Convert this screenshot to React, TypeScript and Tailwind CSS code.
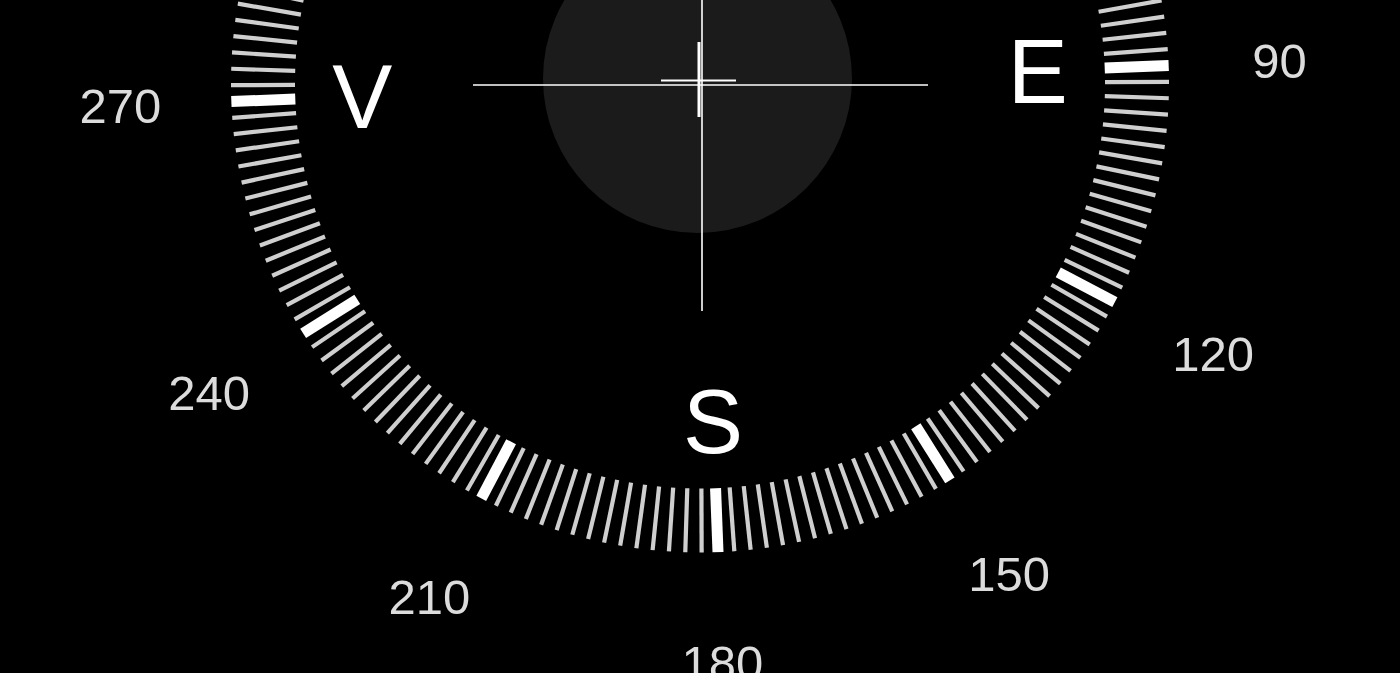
import React from "react";

const CX = 700;
const CY = 83.5;
const TILT = -2.2; // dial rotation in degrees
const R_IN = 405;
const R_OUT = 469;
const R_LETTER = 338;
const R_LABEL = 580;

function polar(r: number, deg: number) {
  const a = ((deg + TILT) * Math.PI) / 180;
  return { x: CX + r * Math.sin(a), y: CY - r * Math.cos(a) };
}

// only the part of the dial that is on screen gets text
const LETTERS = [
  { t: "E", d: 90 },
  { t: "S", d: 180 },
  { t: "V", d: 270 },
];
const LABELS = [90, 120, 150, 180, 210, 240, 270];

export default function App() {
  const ticks = Array.from({ length: 180 }, (_, i) => i * 2);

  return (
    <div className="h-[673px] w-full overflow-hidden bg-black">
      <svg
        className="block h-full w-full font-['Liberation_Sans',Arial,sans-serif]"
        viewBox="0 0 1400 673"
        width="1400"
        height="673"
      >
        <circle cx={697.5} cy={78.5} r={154.5} fill="#1b1b1b" />

        {ticks.map((d) => {
          const major = d % 30 === 0;
          const a = polar(R_IN, d);
          const b = polar(R_OUT, d);
          return (
            <line
              key={d}
              x1={a.x}
              y1={a.y}
              x2={b.x}
              y2={b.y}
              stroke={major ? "#ffffff" : "#cfcfcf"}
              strokeWidth={major ? 11 : 4.2}
            />
          );
        })}

        {LETTERS.map((l) => {
          const p = polar(R_LETTER, l.d);
          return (
            <text key={l.t} x={p.x} y={p.y + 32} textAnchor="middle" fill="#ffffff" fontSize={90}>
              {l.t}
            </text>
          );
        })}

        {LABELS.map((d) => {
          const p = polar(R_LABEL, d);
          return (
            <text key={d} x={p.x} y={p.y + 17} textAnchor="middle" fill="#dcdcdc" fontSize={49}>
              {d}
            </text>
          );
        })}

        <line x1={473} y1={85} x2={928} y2={85} stroke="#ffffff" strokeWidth={1.6} />
        <line x1={702} y1={0} x2={702} y2={311} stroke="#ffffff" strokeWidth={1.6} />
        <line x1={661} y1={80.5} x2={736} y2={80.5} stroke="#ffffff" strokeWidth={1.8} />
        <line x1={699} y1={42} x2={699} y2={117} stroke="#ffffff" strokeWidth={3} />
      </svg>
    </div>
  );
}
